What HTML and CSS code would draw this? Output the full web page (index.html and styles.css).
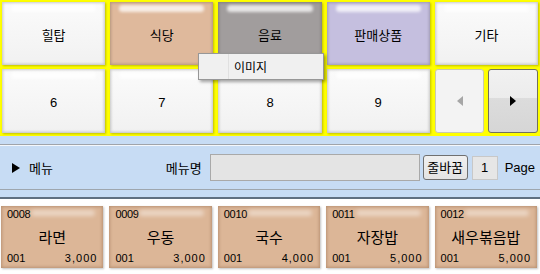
FILE: index.html
```html
<!DOCTYPE html>
<html>
<head>
    <title>메뉴 관리</title>
    <link rel="stylesheet" href="styles.css">
</head>
<body>
    <div class="pad">
        <div class="btn">힐탑</div>
        <div class="btn tan">식당</div>
        <div class="btn gray">음료</div>
        <div class="btn lilac">판매상품</div>
        <div class="btn">기타</div>
        <div class="btn">6</div>
        <div class="btn">7</div>
        <div class="btn">8</div>
        <div class="btn">9</div>
        <div class="nav">
            <div class="nav-btn prev"><span class="tri-left"></span></div>
            <div class="nav-btn next"><span class="tri-right"></span></div>
        </div>
    </div>

    <!-- context menu over the category buttons -->
    <div class="ctx">
        <div class="ctx-gutter"></div>
        <div class="ctx-item">이미지</div>
    </div>

    <div class="band"></div>
    <div class="toolbar">
        <div class="title"><span class="tri-right small"></span>메뉴</div>
        <div class="search">
            <span class="label">메뉴명</span>
            <div class="field"></div>
            <div class="wrap-btn">줄바꿈</div>
            <div class="page-box">1</div>
            <span class="page">Page</span>
        </div>
    </div>
    <div class="band lower"></div>

    <div class="items">
        <div class="item"><div class="code">0008</div><div class="name">라면</div><div class="foot"><span>001</span><span>3,000</span></div></div>
        <div class="item"><div class="code">0009</div><div class="name">우동</div><div class="foot"><span>001</span><span>3,000</span></div></div>
        <div class="item"><div class="code">0010</div><div class="name">국수</div><div class="foot"><span>001</span><span>4,000</span></div></div>
        <div class="item"><div class="code">0011</div><div class="name">자장밥</div><div class="foot"><span>001</span><span>5,000</span></div></div>
        <div class="item"><div class="code">0012</div><div class="name">새우볶음밥</div><div class="foot"><span>001</span><span>5,000</span></div></div>
    </div>
</body>
</html>
```

FILE: styles.css
```css
body {
    margin: 0;
    width: 540px;
    height: 274px;
    overflow: hidden;
    background: #fff;
    font-family: "Liberation Sans", "Noto Sans CJK KR", sans-serif;
    font-size: 12px;
    color: #000;
    position: relative;
}

.pad {
    background: #ffff00;
    display: grid;
    grid-template-columns: repeat(5, 1fr);
    grid-template-rows: 63px 64px;
    gap: 4px 5px;
    padding: 2px 2px 4px 2px;
    height: 136px;
    box-sizing: border-box;
}

.btn {
    position: relative;
    display: flex;
    align-items: center;
    justify-content: center;
    padding-top: 2px;
    background: linear-gradient(#fbfbfb, #f1f1f1);
    box-shadow: inset 0 0 3px 1px rgba(0, 0, 0, 0.2), 1px 1px 2px rgba(0, 0, 0, 0.25);
    font-size: 13px;
}

.btn::before {
    content: "";
    position: absolute;
    left: 9px;
    right: 9px;
    top: 3px;
    height: 7px;
    border-radius: 5px;
    background: rgba(255, 255, 255, 0.75);
    filter: blur(1.5px);
}

.tan { background: #dfb99c; }
.gray { background: #a19d9d; }
.lilac { background: #c5bfdf; }

.nav {
    display: flex;
    gap: 4px;
}

.nav-btn {
    flex: 1;
    display: flex;
    align-items: center;
    justify-content: center;
    border-radius: 3px;
}

.prev {
    background: #f3f3f3;
    border: 1px solid #c9c9b0;
}

.next {
    background: linear-gradient(#f1f1f1 0%, #ececec 45%, #dcdcdc 46%, #d6d6d6 100%);
    border: 1px solid #707060;
}

.tri-left {
    width: 0;
    height: 0;
    border-top: 5px solid transparent;
    border-bottom: 5px solid transparent;
    border-right: 6px solid #a6a6a6;
}

.tri-right {
    width: 0;
    height: 0;
    border-top: 5px solid transparent;
    border-bottom: 5px solid transparent;
    border-left: 6px solid #000;
}

.tri-right.small {
    display: inline-block;
    margin-right: 9px;
    border-left-width: 8px;
}

.ctx {
    position: absolute;
    left: 198px;
    top: 53px;
    width: 126px;
    height: 27px;
    box-sizing: border-box;
    background: #f0f0f0;
    border: 1px solid #979797;
    box-shadow: 2px 2px 3px rgba(0, 0, 0, 0.35);
    display: flex;
    align-items: center;
    font-size: 12px;
}

.ctx-gutter {
    width: 29px;
    height: 100%;
    border-right: 1px solid #e0e0e0;
}

.ctx-item {
    padding-left: 5px;
}

.band {
    height: 8px;
    background: #c7dcf4;
    border-bottom: 1px solid #a0a4aa;
    box-shadow: 0 1px 0 #f4f8fc;
}

.band.lower {
    height: 7px;
    border-top: 1px solid #9ea6ae;
    border-bottom: 2px solid #5f6f80;
    box-shadow: none;
}

.toolbar {
    height: 43px;
    margin-top: 1px;
    background: #c7dcf4;
    display: flex;
    align-items: center;
    justify-content: space-between;
    padding: 0 5px 0 12px;
    font-size: 13px;
}

.title {
    display: flex;
    align-items: center;
}

.search {
    display: flex;
    align-items: center;
}

.label {
    margin-right: 8px;
}

.field {
    width: 208px;
    height: 25px;
    background: #e4e4e4;
    border: 1px solid #a9a9a9;
}

.wrap-btn {
    margin-left: 3px;
    width: 43px;
    height: 23px;
    line-height: 23px;
    text-align: center;
    background: linear-gradient(#f0f0f0, #e3e3e3);
    border: 1px solid #707070;
    border-radius: 3px;
}

.page-box {
    margin-left: 4px;
    width: 26px;
    height: 24px;
    line-height: 22px;
    text-align: center;
    background: #e6e6e6;
    border: 1px solid #c8c8c8;
    box-sizing: border-box;
}

.page {
    margin-left: 7px;
}

.items {
    display: grid;
    grid-template-columns: repeat(5, 1fr);
    gap: 6px;
    padding: 7px 3px 0 1px;
}

.item {
    position: relative;
    height: 62px;
    background: #dcb697;
    box-shadow: inset 0 0 3px 1px rgba(120, 80, 50, 0.35), 1px 1px 2px rgba(0, 0, 0, 0.25);
    display: flex;
    flex-direction: column;
    padding: 2px 6px 4px 6px;
    box-sizing: border-box;
}

.item::before {
    content: "";
    position: absolute;
    left: 30px;
    right: 8px;
    top: 4px;
    height: 6px;
    border-radius: 4px;
    background: rgba(255, 255, 255, 0.45);
    filter: blur(2px);
}

.code {
    font-size: 11px;
    letter-spacing: -0.3px;
}

.name {
    flex: 1;
    display: flex;
    align-items: center;
    justify-content: center;
    font-size: 15px;
}

.foot {
    display: flex;
    justify-content: space-between;
    font-size: 11px;
}

.foot span:last-child {
    letter-spacing: 1px;
}
```
